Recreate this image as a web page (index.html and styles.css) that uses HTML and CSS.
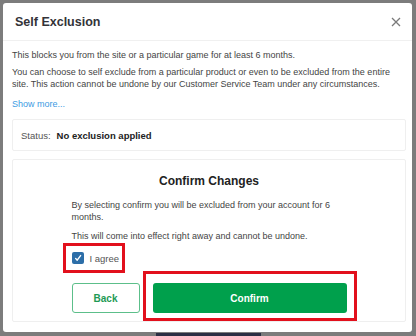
FILE: index.html
```html
<!DOCTYPE html>
<html>
<head>
<meta charset="utf-8">
<link rel="stylesheet" href="styles.css">
</head>
<body>
<div class="modal">
  <div class="modal-header">
    <h1 class="modal-title">Self Exclusion</h1>
    <button class="close" aria-label="Close">
      <svg width="10" height="10" viewBox="0 0 10 10"><path d="M1 1L9 9M9 1L1 9" stroke="#7a7a7a" stroke-width="1.3" fill="none"/></svg>
    </button>
  </div>
  <div class="modal-body">
    <p class="intro">This blocks you from the site or a particular game for at least 6 months.</p>
    <p class="intro intro-2">You can choose to self exclude from a particular product or even to be excluded from the entire site. This action cannot be undone by our Customer Service Team under any circumstances.</p>
    <a class="show-more" href="#">Show more...</a>
    <div class="status-box">
      <span class="status-label">Status:</span>
      <span class="status-value">No exclusion applied</span>
    </div>
    <div class="confirm-box">
      <h2 class="confirm-title">Confirm Changes</h2>
      <div class="confirm-col">
        <p class="confirm-text">By selecting confirm you will be excluded from your account for 6 months.</p>
        <p class="confirm-text confirm-text-2">This will come into effect right away and cannot be undone.</p>
        <div class="agree highlight">
          <span class="checkbox">
            <svg width="12" height="12" viewBox="0 0 12 12"><path d="M3.6 6.4L5.2 8.2L8.6 3.6" stroke="#fff" stroke-width="1.4" fill="none" stroke-linecap="round" stroke-linejoin="round"/></svg>
          </span>
          <span class="agree-label">I agree</span>
        </div>
        <div class="actions">
          <button class="btn btn-back">Back</button>
          <div class="highlight confirm-wrap">
            <button class="btn btn-confirm">Confirm</button>
          </div>
        </div>
      </div>
    </div>
  </div>
</div>
<div class="page-bar"></div>
</body>
</html>
```

FILE: styles.css
```css
* { box-sizing: border-box; }
html, body { margin: 0; padding: 0; }
body {
  background: #7c7c7c;
  font-family: "Liberation Sans", Arial, sans-serif;
  width: 416px;
  height: 336px;
  overflow: hidden;
  padding-top: 3px;
}
.modal {
  margin-left: 3px;
  width: 409px;
  height: 329px;
  background: #fff;
  border-radius: 3px;
  overflow: hidden;
}
.modal-header {
  height: 38px;
  display: flex;
  align-items: center;
  justify-content: space-between;
  padding: 0 10px 0 12px;
  border-bottom: 1px solid #f0f0f0;
}
.modal-title {
  margin: 0;
  font-size: 12.5px;
  font-weight: bold;
  color: #333338;
}
.close {
  border: 0;
  background: none;
  padding: 0;
  width: 12px;
  height: 12px;
  display: flex;
  align-items: center;
  justify-content: center;
}
.modal-body {
  padding: 8px 6px 0 9px;
}
.intro {
  margin: 0;
  font-size: 9px;
  line-height: 12px;
  color: #444;
}
.intro-2 { margin-top: 5px; }
.show-more {
  display: block;
  margin-top: 8px;
  font-size: 9px;
  line-height: 12px;
  color: #3d9be3;
  text-decoration: none;
}
.status-box {
  margin-top: 9px;
  height: 32px;
  border: 1px solid #efefef;
  border-radius: 2px;
  display: flex;
  align-items: center;
  padding-left: 8px;
  font-size: 9.5px;
}
.status-label { color: #555; margin-right: 6px; }
.status-value { color: #222; font-weight: bold; }
.confirm-box {
  margin-top: 8px;
  height: 163px;
  border: 1px solid #efefef;
  border-radius: 2px;
  padding-top: 13px;
}
.confirm-title {
  margin: 0;
  text-align: center;
  font-size: 12px;
  line-height: 16px;
  font-weight: bold;
  color: #222;
}
.confirm-col {
  width: 275px;
  margin: 10px auto 0;
}
.confirm-text {
  margin: 0;
  font-size: 9px;
  line-height: 12px;
  color: #444;
}
.confirm-text-2 { margin-top: 7px; }
.highlight { border: 3px solid #e2101c; }
.agree {
  display: inline-flex;
  align-items: center;
  margin-top: 1px;
  margin-left: -9px;
  padding: 6px 3px 6px 6px;
}
.checkbox {
  width: 12px;
  height: 12px;
  border-radius: 2px;
  background: #2c6ea8;
  display: flex;
}
.agree-label {
  margin-left: 6px;
  font-size: 9.5px;
  color: #555;
}
.actions {
  display: flex;
  align-items: flex-start;
  margin-top: -2px;
}
.btn {
  font-family: "Liberation Sans", Arial, sans-serif;
  font-weight: bold;
  font-size: 10px;
  height: 30px;
  border-radius: 3px;
  cursor: pointer;
  flex-shrink: 0;
}
.btn-back {
  margin-top: 12px;
  width: 68px;
  background: #fff;
  color: #1e9a55;
  border: 1px solid #5cbf8a;
}
.confirm-wrap {
  flex-shrink: 0;
  margin-left: 3px;
  padding: 9px 7px 5px 7px;
}
.btn-confirm {
  display: block;
  width: 194px;
  background: #00a04c;
  color: #fff;
  border: 0;
}
.page-bar {
  margin: 1px auto 0;
  width: 105px;
  height: 4px;
  background: #2b2f44;
}
```
